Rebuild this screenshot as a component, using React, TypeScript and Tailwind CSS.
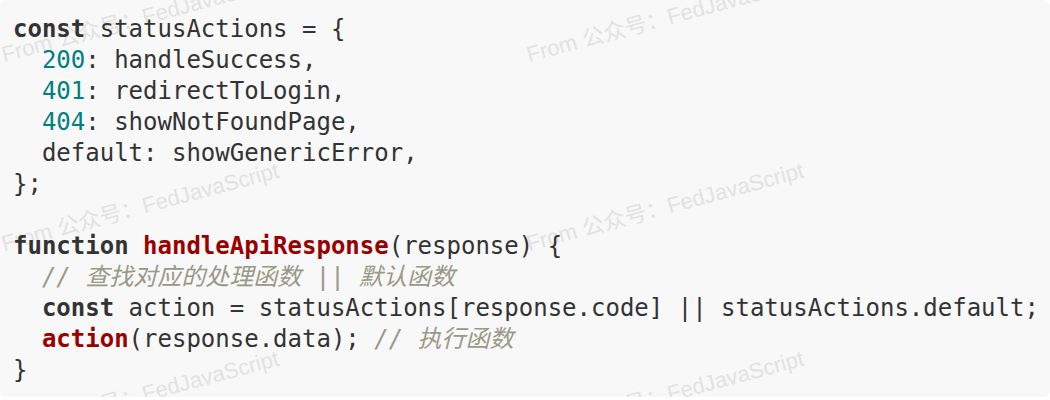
import React from 'react';

const Kw = ({ children }: { children: React.ReactNode }) => (
  <span className="font-bold text-[#333333]">{children}</span>
);
const Num = ({ children }: { children: React.ReactNode }) => (
  <span className="text-[#008080]">{children}</span>
);
const Title = ({ children }: { children: React.ReactNode }) => (
  <span className="font-bold text-[#990000]">{children}</span>
);
const Comment = ({ children }: { children: React.ReactNode }) => (
  <span className="italic text-[#999988]">{children}</span>
);

const Watermark = ({ className }: { className: string }) => (
  <div
    className={`absolute origin-bottom-left -rotate-[15deg] whitespace-nowrap text-[22px] leading-none text-[#e2e2e2] font-['Liberation_Sans','Noto_Sans_CJK_SC',sans-serif] ${className}`}
  >
    From 公众号：FedJavaScript
  </div>
);

const App: React.FC = () => {
  return (
    <div className="w-[1050px] h-[400px] bg-white">
      <div className="relative h-[397px] overflow-hidden rounded-md bg-[#f8f8f8]">
        {/* watermark tiles */}
        <div className="pointer-events-none absolute inset-0">
          <Watermark className="left-[5px] top-[44px]" />
          <Watermark className="left-[530px] top-[44px]" />
          <Watermark className="left-[5px] top-[233px]" />
          <Watermark className="left-[530px] top-[233px]" />
          <Watermark className="left-[5px] top-[421px]" />
          <Watermark className="left-[530px] top-[421px]" />
        </div>

        <pre className="relative px-[13px] pt-[14px] text-[24px] leading-[31px] text-[#333333] font-['DejaVu_Sans_Mono','Noto_Sans_CJK_SC',monospace]">
          <div><Kw>const</Kw> statusActions = {'{'}</div>
          <div>  <Num>200</Num>: handleSuccess,</div>
          <div>  <Num>401</Num>: redirectToLogin,</div>
          <div>  <Num>404</Num>: showNotFoundPage,</div>
          <div>  default: showGenericError,</div>
          <div>{'};'}</div>
          <div> </div>
          <div><Kw>function</Kw> <Title>handleApiResponse</Title>(response) {'{'}</div>
          <div>  <Comment>// 查找对应的处理函数 || 默认函数</Comment></div>
          <div>  <Kw>const</Kw> action = statusActions[response.code] || statusActions.default;</div>
          <div>  <Title>action</Title>(response.data); <Comment>// 执行函数</Comment></div>
          <div>{'}'}</div>
        </pre>
      </div>
    </div>
  );
};

export default App;
